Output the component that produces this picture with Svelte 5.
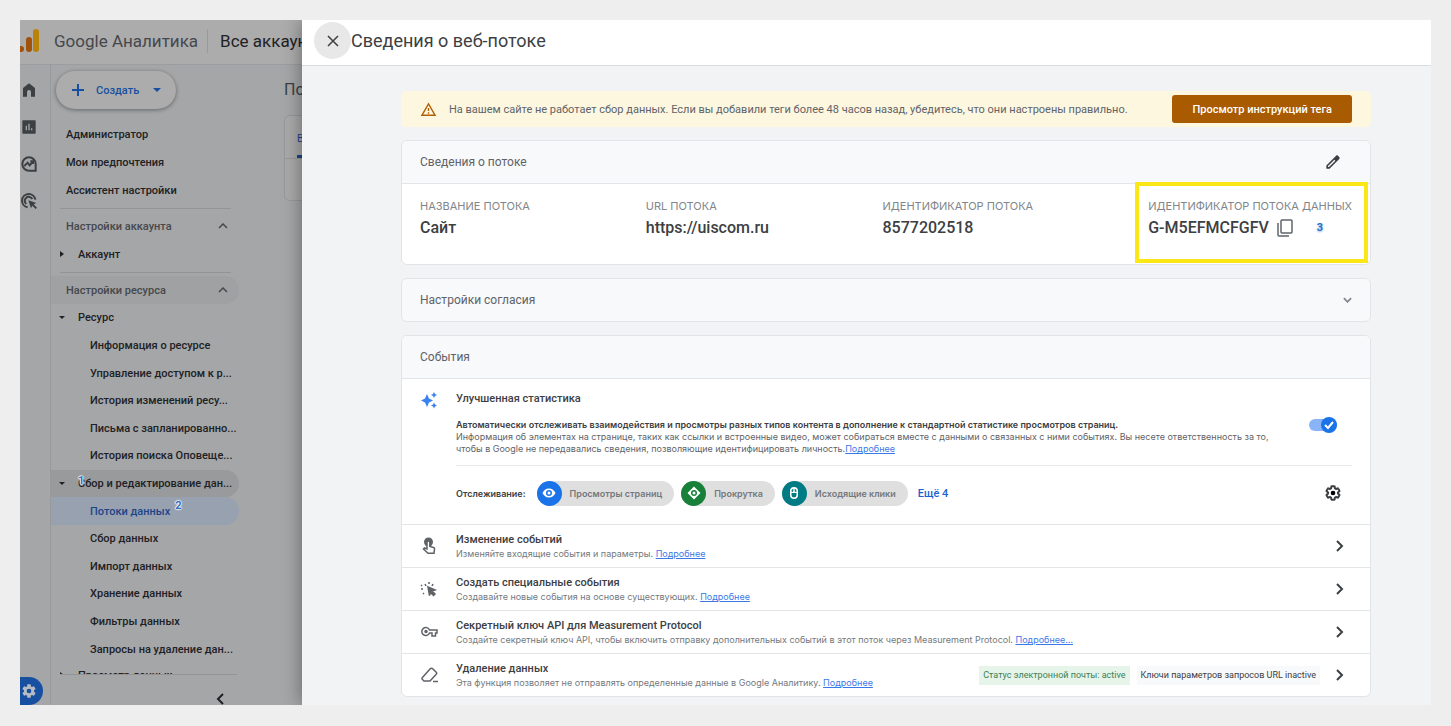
<script>
	const accountLinks = ['Администратор', 'Мои предпочтения', 'Ассистент настройки'];

	const resourceItems = [
		{ label: 'Ресурс', group: true },
		{ label: 'Информация о ресурсе' },
		{ label: 'Управление доступом к р...' },
		{ label: 'История изменений ресу...' },
		{ label: 'Письма с запланированно...' },
		{ label: 'История поиска Оповеще...' },
		{ label: 'Сбор и редактирование дан...', group: true, hovered: true, mark: '1' },
		{ label: 'Потоки данных', active: true, mark: '2' },
		{ label: 'Сбор данных' },
		{ label: 'Импорт данных' },
		{ label: 'Хранение данных' },
		{ label: 'Фильтры данных' },
		{ label: 'Запросы на удаление дан...' }
	];

	const trackers = [
		{ label: 'Просмотры страниц', icon: 'eye', color: '#1a73e8' },
		{ label: 'Прокрутка', icon: 'scroll', color: '#188038' },
		{ label: 'Исходящие клики', icon: 'mouse', color: '#007b83' }
	];

	const eventRows = [
		{
			icon: 'touch',
			title: 'Изменение событий',
			text: 'Изменяйте входящие события и параметры.',
			more: 'Подробнее'
		},
		{
			icon: 'burst',
			title: 'Создать специальные события',
			text: 'Создавайте новые события на основе существующих.',
			more: 'Подробнее'
		},
		{
			icon: 'key',
			title: 'Секретный ключ API для Measurement Protocol',
			text: 'Создайте секретный ключ API, чтобы включить отправку дополнительных событий в этот поток через Measurement Protocol.',
			more: 'Подробнее…'
		},
		{
			icon: 'eraser',
			title: 'Удаление данных',
			text: 'Эта функция позволяет не отправлять определенные данные в Google Аналитику.',
			more: 'Подробнее',
			status: true
		}
	];

	const gear =
		'M19.43 12.98c.04-.32.07-.64.07-.98s-.03-.66-.07-.98l2.11-1.65c.19-.15.24-.42.12-.64l-2-3.46c-.12-.22-.39-.3-.61-.22l-2.49 1c-.52-.4-1.08-.73-1.69-.98l-.38-2.65C14.46 2.18 14.25 2 14 2h-4c-.25 0-.46.18-.49.42l-.38 2.65c-.61.25-1.17.59-1.69.98l-2.49-1c-.23-.09-.49 0-.61.22l-2 3.46c-.13.22-.07.49.12.64l2.11 1.65c-.04.32-.07.65-.07.98s.03.66.07.98l-2.11 1.65c-.19.15-.24.42-.12.64l2 3.46c.12.22.39.3.61.22l2.49-1c.52.4 1.08.73 1.69.98l.38 2.65c.03.24.24.42.49.42h4c.25 0 .46-.18.49-.42l.38-2.65c.61-.25 1.17-.59 1.69-.98l2.49 1c.23.09.49 0 .61-.22l2-3.46c.12-.22.07-.49-.12-.64l-2.11-1.65z';

	let enhanced = true;
</script>

<div class="page">
	<div class="frame">
		<div class="app">
			<header class="app-header">
				<svg class="logo" viewBox="0 0 19 24" aria-hidden="true">
					<rect x="13" y="0" width="6" height="23" rx="3" fill="#b98208" />
					<rect x="6" y="8" width="6" height="15" rx="3" fill="#a0510a" />
					<circle cx="1" cy="20" r="3" fill="#a0510a" />
				</svg>
				<span class="brand">Google Аналитика</span>
				<span class="all-accounts">Все аккаунты</span>
			</header>

			<div class="app-body">
				<nav class="rail" aria-label="Разделы">
					<a href="#home" aria-label="Главная">
						<svg viewBox="0 0 24 24"><path d="M3 22V9l9-7 9 7v13h-6v-7a3 3 0 0 0-6 0v7z" /></svg>
					</a>
					<a href="#reports" aria-label="Отчеты">
						<svg viewBox="0 0 24 24"><path fill-rule="evenodd" d="M3 2h18a1 1 0 0 1 1 1v18a1 1 0 0 1-1 1H3a1 1 0 0 1-1-1V3a1 1 0 0 1 1-1zm4 8v7h2v-7zm4-3v10h2V7zm4 7v3h2v-3z" /></svg>
					</a>
					<a href="#explore" aria-label="Исследования">
						<svg viewBox="0 0 24 24"><path class="line" d="M12 2a10 10 0 1 0 0 20h10V12A10 10 0 0 0 12 2z" /><path class="line" d="M5 15l5-5 3 4 5-6M14 8h4v4" /></svg>
					</a>
					<a href="#ads" aria-label="Реклама">
						<svg viewBox="0 0 24 24"><path class="line" d="M10 21.500A10 10 0 1 1 21.500 10M8 16.500A6 6 0 1 1 17 9" /><path d="M11 11l12 4-4 2 5 5-2 2-5-5-2 4z" /></svg>
					</a>
					<a class="admin" href="#admin" aria-label="Администратор">
						<svg viewBox="0 0 24 24"><path fill-rule="evenodd" d="{gear}M12 8.500a3.500 3.500 0 1 0 0 7 3.500 3.500 0 0 0 0-7z" /></svg>
					</a>
				</nav>

				<aside class="sidebar">
					<button class="create">
						<svg viewBox="0 0 14 14" aria-hidden="true"><path d="M7 1v12M1 7h12" stroke="currentColor" stroke-width="2" /></svg>
						<span>Создать</span>
						<i class="tri"></i>
					</button>

					{#each accountLinks as link}
						<a class="item" href="#settings">{link}</a>
					{/each}

					<hr />
					<button class="section">
						Настройки аккаунта
						<svg viewBox="0 0 10 6" aria-hidden="true"><path d="M1 5l4-4 4 4" /></svg>
					</button>
					<a class="item group" href="#account"><i class="tri right"></i>Аккаунт</a>
					<hr />
					<button class="section hovered">
						Настройки ресурса
						<svg viewBox="0 0 10 6" aria-hidden="true"><path d="M1 5l4-4 4 4" /></svg>
					</button>

					<div class="tree">
						{#each resourceItems as item}
							<a
								class="item"
								class:group={item.group}
								class:child={!item.group}
								class:hovered={item.hovered}
								class:active={item.active}
								href="#property"
							>
								{#if item.group}<i class="tri"></i>{/if}
								<span class="label">
									{item.label}
									{#if item.mark}<b class="mark" class:first={item.group}>{item.mark}</b>{/if}
								</span>
							</a>
						{/each}
					</div>

					<div class="cut">
						<a class="item group" href="#view"><i class="tri right"></i>Просмотр данных</a>
					</div>
					<div class="collapse">
						<button aria-label="Свернуть меню">
							<svg viewBox="0 0 8 12"><path d="M7 1L2 6l5 5" /></svg>
						</button>
					</div>
				</aside>

				<section class="behind">
					<h2>Потоки данных</h2>
					<div class="behind-card">
						<div class="behind-tab"><span>Все</span></div>
					</div>
				</section>
			</div>
		</div>

		<main class="drawer">
			<header class="drawer-header">
				<button class="close" aria-label="Закрыть">
					<svg viewBox="0 0 12 12"><path d="M1 1l10 10M11 1L1 11" /></svg>
				</button>
				<h1>Сведения о веб-потоке</h1>
			</header>

			<div class="content">
				<div class="banner">
					<svg viewBox="0 0 24 24" aria-hidden="true"><path d="M12 6l7.500 13h-15L12 6m0-4L1 21h22L12 2zm1 14h-2v2h2v-2zm0-6h-2v4h2v-4z" /></svg>
					<p>На вашем сайте не работает сбор данных. Если вы добавили теги более 48 часов назад, убедитесь, что они настроены правильно.</p>
					<button>Просмотр инструкций тега</button>
				</div>

				<section class="card">
					<div class="card-head">
						<h2>Сведения о потоке</h2>
						<button class="edit" aria-label="Изменить">
							<svg viewBox="0 0 24 24"><path d="M14 8.500l1.500 1.500L6 19.500H4.500V18L14 8.500M18 2c-.5 0-1 .2-1.400.6L2 17.200V22h4.800L21.400 7.400c.8-.8.8-2 0-2.800l-2-2C19 2.200 18.500 2 18 2z" fill-rule="evenodd" /></svg>
						</button>
					</div>
					<dl class="details">
						<div>
							<dt>НАЗВАНИЕ ПОТОКА</dt>
							<dd>Сайт</dd>
						</div>
						<div>
							<dt>URL ПОТОКА</dt>
							<dd>https://uiscom.ru</dd>
						</div>
						<div>
							<dt>ИДЕНТИФИКАТОР ПОТОКА</dt>
							<dd>8577202518</dd>
						</div>
						<div class="highlighted">
							<dt>ИДЕНТИФИКАТОР ПОТОКА ДАННЫХ</dt>
							<dd>
								G-M5EFMCFGFV
								<button class="copy" aria-label="Копировать">
									<svg viewBox="0 0 16 18"><path d="M5 1h9a1 1 0 0 1 1 1v11a1 1 0 0 1-1 1H5a1 1 0 0 1-1-1V2a1 1 0 0 1 1-1zM1 4v12a1 1 0 0 0 1 1h10" /></svg>
								</button>
								<b class="mark">3</b>
							</dd>
						</div>
					</dl>
				</section>

				<section class="card">
					<div class="card-head">
						<h2>Настройки согласия</h2>
						<button class="expand" aria-label="Развернуть">
							<svg viewBox="0 0 10 6"><path d="M1 1l4 4 4-4" /></svg>
						</button>
					</div>
				</section>

				<section class="card">
					<div class="card-head">
						<h2>События</h2>
					</div>

					<div class="enhanced">
						<svg class="sparkle" viewBox="0 0 18 18" aria-hidden="true">
							<path d="M7 3L9 7.500 13 9.500 9 11.500 7 16 5 11.500 1 9.500 5 7.500z" />
							<path d="M14 1l1 2 2 1-2 1-1 2-1-2-2-1 2-1zM14 11.500l1 2 2 1-2 1-1 2-1-2-2-1 2-1z" />
						</svg>
						<div class="enhanced-main">
							<h3>Улучшенная статистика</h3>
							<div class="about">
								<p>
									<strong>Автоматически отслеживать взаимодействия и просмотры разных типов контента в дополнение к стандартной статистике просмотров страниц.</strong><br />
									Информация об элементах на странице, таких как ссылки и встроенные видео, может собираться вместе с данными о связанных с ними событиях. Вы несете ответственность за то, чтобы в Google не передавались сведения, позволяющие идентифицировать личность.<a href="#more">Подробнее</a>
								</p>
								<label class="switch">
									<input type="checkbox" bind:checked={enhanced} aria-label="Улучшенная статистика" />
									<span class="knob">
										<svg viewBox="0 0 16 16"><path d="M4 8l3 3 5-6" /></svg>
									</span>
								</label>
							</div>
							<div class="tracking">
								<span class="tracking-label">Отслеживание:</span>
								{#each trackers as t}
									<span class="chip">
										<span class="chip-icon" style="background: {t.color}">
											<svg viewBox="0 0 14 14" aria-hidden="true">
												{#if t.icon === 'eye'}
													<path fill-rule="evenodd" d="M7 2.500C4 2.500 1.600 4.300.5 7c1.100 2.700 3.500 4.500 6.500 4.500s5.400-1.800 6.500-4.500C12.400 4.300 10 2.500 7 2.500zM7 4a3 3 0 1 1 0 6 3 3 0 0 1 0-6z" />
													<circle cx="7" cy="7" r="1.500" />
												{:else if t.icon === 'scroll'}
													<path fill-rule="evenodd" d="M7 .500L13.500 7 7 13.500.500 7zM7 4a3 3 0 1 0 0 6 3 3 0 0 0 0-6z" />
													<circle cx="7" cy="7" r="1.500" />
												{:else}
													<path fill-rule="evenodd" d="M7 1a4 4 0 0 1 4 4v4a4 4 0 0 1-8 0V5a4 4 0 0 1 4-4zM4.500 7v2a2.500 2.500 0 0 0 5 0V7zM4.500 5.800h1.800V2.700A2.500 2.500 0 0 0 4.500 5zm3.200 0h1.800V5a2.500 2.500 0 0 0-1.800-2.300z" />
												{/if}
											</svg>
										</span>
										{t.label}
									</span>
								{/each}
								<a class="more-chips" href="#all">Ещё 4</a>
								<button class="gear" aria-label="Настроить">
									<svg viewBox="0 0 24 24"><path d={gear} /><circle cx="12" cy="12" r="3.500" /></svg>
								</button>
							</div>
						</div>
					</div>

					{#each eventRows as row}
						<div class="event">
							<svg class="event-icon" viewBox="0 0 18 18" aria-hidden="true">
								{#if row.icon === 'touch'}
									<circle cx="8.500" cy="5" r="4.500" fill="currentColor" stroke="none" />
									<path d="M7 12V5.500a1.400 1.400 0 0 1 2.800 0V9.500l3.700 1c.8.200 1.200.8 1 1.600L14 16.200H8L3.500 12l1-1z" fill="#fff" />
								{:else if row.icon === 'burst'}
									<path d="M8 7l7 3-3 1 3 3-1.500 1.500-3-3-1 3z" fill="currentColor" />
									<path d="M5 4l1 2M9 2v2M13 4l-1 2M1 9h2M4 13l-1 1M1 5l1 1" />
								{:else if row.icon === 'key'}
									<path d="M9.500 7H17v3h-1.500v3H12v-3H9.500a4 4 0 1 1 0-3z" />
									<circle cx="6" cy="8.500" r="1" fill="currentColor" />
								{:else}
									<path d="M2 12l8-9c1-1 2-1 3 0l3 3c1 1 1 1.500 0 2.500L10 15H4l-2-2zM13 15.500h5" />
								{/if}
							</svg>
							<div class="event-text">
								<h3>{row.title}</h3>
								<p>{row.text} <a href="#more">{row.more}</a></p>
							</div>
							{#if row.status}
								<span class="status on">Статус электронной почты: active</span>
								<span class="status">Ключи параметров запросов URL inactive</span>
							{/if}
							<button class="next" aria-label={row.title}>
								<svg viewBox="0 0 8 12"><path d="M1 1l5 5-5 5" /></svg>
							</button>
						</div>
					{/each}
				</section>
			</div>
		</main>
	</div>
</div>

<style>
	:global(body) {
		background: #eee;
	}

	.page {
		padding: 20px;
		font-family: Roboto, "Liberation Sans", sans-serif;
		font-size: 11px;
		color: #3c4043;
	}

	.page * {
		box-sizing: border-box;
	}

	h1,
	h2,
	h3,
	p,
	dl,
	dd {
		margin: 0;
	}

	button {
		font: inherit;
		color: inherit;
		border: 0;
		padding: 0;
		background: none;
		cursor: pointer;
	}

	a {
		text-decoration: none;
		color: inherit;
	}

	svg {
		display: block;
		flex: none;
	}

	.frame {
		display: grid;
		grid-template-columns: 282px minmax(0, 1fr);
		overflow: hidden;
	}

	/* dimmed application under the drawer */
	.app {
		display: flex;
		flex-direction: column;
		overflow: hidden;
		background: #a5a6a8;
		color: #202124;
		white-space: nowrap;
	}

	.app-header {
		display: flex;
		align-items: center;
		height: 45px;
		padding-bottom: 3px;
		background: #acacac;
		border-bottom: 1px solid #9b9ea1;
		font-size: 17px;
	}

	.logo {
		width: 19px;
		height: 24px;
		margin-right: 15px;
	}

	.brand {
		color: #45484c;
	}

	.all-accounts {
		margin-left: 9px;
		padding-left: 12px;
		line-height: 24px;
		border-left: 1px solid #999;
	}

	.app-body {
		display: flex;
		flex: 1;
	}

	.rail {
		display: flex;
		flex: none;
		flex-direction: column;
		width: 31px;
		padding-top: 17px;
		gap: 21px;
		border-right: 1px solid #98999b;
		color: #3c4043;
	}

	.rail svg {
		width: 16px;
		height: 16px;
		margin-left: 1px;
		fill: currentColor;
	}

	.rail .line {
		fill: none;
		stroke: currentColor;
		stroke-width: 3;
	}

	.rail .admin {
		display: flex;
		align-items: center;
		width: 23px;
		height: 28px;
		margin-top: auto;
		border-radius: 0 14px 14px 0;
		background: #1750a0;
		color: #b8bcc2;
	}

	.sidebar {
		display: flex;
		flex: none;
		flex-direction: column;
		width: 188px;
	}

	.create {
		display: flex;
		align-items: center;
		width: 120px;
		height: 38px;
		margin: 6px 0 11px 5px;
		padding: 0 15px;
		border-radius: 19px;
		background: #acacac;
		box-shadow: 0 1px 4px rgba(0, 0, 0, 0.4);
		color: #1750a0;
		font-weight: 500;
	}

	.create svg {
		width: 14px;
		height: 14px;
		margin-right: 11px;
	}

	.tri {
		flex: none;
		border: 4px solid transparent;
		border-top-color: currentColor;
		border-bottom: 0;
	}

	.tree .tri {
		border-width: 3px;
		border-bottom: 0;
		margin: 0 1px;
	}

	.tri.right {
		border: 3px solid transparent;
		border-left: 4px solid currentColor;
		border-right: 0;
		margin: 0 2px;
	}

	.create .tri {
		margin-left: auto;
	}

	.item,
	.section {
		display: flex;
		align-items: center;
		flex: none;
		height: 28px;
		padding-left: 15px;
		font-weight: 500;
		border-radius: 0 14px 14px 0;
	}

	hr {
		width: 171px;
		margin: 4px 0 3px 9px;
		border: 0;
		border-top: 1px solid #939496;
	}

	.section {
		justify-content: space-between;
		padding-right: 11px;
		color: #45484c;
	}

	.section svg {
		width: 10px;
		height: 6px;
	}

	.section path,
	.collapse path,
	.close path,
	.copy path,
	.expand path,
	.next path,
	.knob path {
		fill: none;
		stroke: currentColor;
		stroke-width: 2;
	}

	.section path,
	.close path,
	.copy path {
		stroke-width: 1.5;
	}

	.section.hovered {
		background: #a0a1a2;
	}

	.tree {
		display: grid;
		flex: 1;
		grid-auto-rows: minmax(0, 1fr);
	}

	.tree .item {
		height: auto;
	}

	.item.group {
		gap: 12px;
		padding-left: 7px;
	}

	.item.child {
		padding-left: 39px;
	}

	.item.hovered {
		background: #999a9c;
	}

	.item.active {
		background: #97a1b0;
		color: #1c4587;
	}

	.label {
		position: relative;
	}

	.mark {
		color: #2f6fc4;
		font-size: 11px;
		font-weight: 700;
		text-shadow: 0 0 1px #fff, 0 0 1px #fff, 0 0 2px #fff, 0 0 2px #fff, 0 0 2px #fff;
	}

	.label .mark {
		position: absolute;
		left: 100%;
		top: -6px;
		margin-left: 5px;
	}

	.label .mark.first {
		left: 0;
		top: -3px;
		margin-left: 0;
	}

	dd .mark {
		text-shadow: 0 1px 2px #8ab4f8;
	}

	.cut {
		height: 12px;
		overflow: hidden;
		border-bottom: 1px solid #939496;
		margin: 0 2px 0 9px;
	}

	.cut .item {
		height: 24px;
		margin-left: -9px;
	}

	.collapse {
		display: flex;
		align-items: flex-end;
		justify-content: flex-end;
		height: 30px;
		padding-right: 15px;
	}

	.collapse svg {
		width: 8px;
		height: 12px;
	}

	.behind {
		flex: none;
		width: 200px;
		padding: 15px 0 0 15px;
	}

	.behind h2 {
		margin-left: 30px;
		line-height: 20px;
	}

	.behind-card {
		height: 86px;
		margin: 15px 0 0 30px;
		border: 1px solid #989898;
		border-radius: 6px;
		background: #a9a9aa;
	}

	.behind-tab {
		height: 43px;
		padding: 16px 12px 0;
		border-bottom: 1px solid #989898;
		color: #1c4587;
	}

	.behind-tab span {
		display: inline-block;
		height: 26px;
		border-bottom: 3px solid #1c4587;
	}

	/* drawer */
	.drawer {
		position: relative;
		background: #f1f3f4;
		box-shadow: 0 0 18px rgba(0, 0, 0, 0.4);
	}

	.drawer-header {
		display: flex;
		align-items: center;
		height: 46px;
		padding: 0 0 4px 12px;
		background: #fff;
		border-bottom: 1px solid #dadce0;
	}

	.close {
		display: flex;
		align-items: center;
		justify-content: center;
		width: 37px;
		height: 37px;
		border-radius: 50%;
		background: #e8e8e8;
	}

	.close svg {
		width: 12px;
		height: 12px;
	}

	h1 {
		font-size: 18px;
		font-weight: 400;
		color: #3c4043;
	}

	.content {
		display: flex;
		flex-direction: column;
		gap: 13px;
		padding: 25px 60px 8px 99px;
	}

	.banner {
		display: flex;
		align-items: center;
		height: 36px;
		padding: 0 19px;
		border-radius: 5px;
		background: #fef7e0;
	}

	.banner svg {
		width: 17px;
		height: 17px;
		margin-right: 12px;
		fill: #b06000;
	}

	.banner p {
		flex: 1;
		color: #5f6368;
	}

	.banner button {
		height: 28px;
		padding: 0 20px;
		border-radius: 3px;
		background: #a85b00;
		color: #fff;
		font-weight: 500;
	}

	.card {
		border: 1px solid #e2e4e7;
		border-radius: 6px;
		background: #fff;
		overflow: hidden;
	}

	.card-head {
		display: flex;
		align-items: center;
		justify-content: space-between;
		height: 42px;
		padding: 0 18px;
		background: #f8f9fb;
	}

	.card-head + * {
		border-top: 1px solid #e2e4e7;
	}

	h2 {
		font-size: 12px;
		font-weight: 400;
		color: #5f6368;
	}

	.app h2 {
		font-size: 16px;
		color: #3c4043;
	}

	.edit {
		margin-right: 11px;
	}

	.edit svg {
		width: 16px;
		height: 16px;
		fill: #3c4043;
	}

	.expand {
		color: #80868b;
	}

	.expand svg {
		width: 9px;
		height: 6px;
	}

	.details {
		display: grid;
		grid-template-columns: 226fr 237fr 266fr 222fr;
		height: 81px;
		padding-left: 18px;
	}

	.details > div {
		position: relative;
		padding-top: 14px;
	}

	dt {
		line-height: 16px;
		font-family: Inter, Roboto, sans-serif;
		font-size: 11px;
		color: #80868b;
	}

	dd {
		display: flex;
		align-items: center;
		line-height: 20px;
		margin-top: 4px;
		font-size: 16px;
		font-weight: 500;
		color: #3c4043;
	}

	.copy {
		margin: 0 24px 0 8px;
		color: #5f6368;
	}

	.copy svg {
		width: 16px;
		height: 18px;
	}

	.highlighted::before {
		content: '';
		position: absolute;
		inset: -2px 2px 1px -13px;
		border: 4px solid #fbe716;
		pointer-events: none;
	}

	.enhanced {
		display: flex;
		gap: 18px;
		padding: 12px 18px 0;
		height: 146px;
	}

	.sparkle {
		width: 18px;
		height: 18px;
		fill: #3b82f0;
	}

	.enhanced-main {
		flex: 1;
	}

	h3 {
		font-size: 11px;
		line-height: 16px;
		font-weight: 500;
	}

	.about {
		display: flex;
		padding: 12px 0 10px;
		border-bottom: 1px solid #e8eaed;
	}

	.about p {
		flex: 1;
		font-family: Inter, Roboto, sans-serif;
		font-size: 9px;
		line-height: 12px;
		color: #5f6368;
	}

	.about strong {
		font-weight: 600;
		color: #3c4043;
	}

	.about a,
	.event a {
		color: #3b78e7;
		text-decoration: underline;
	}

	.switch {
		display: flex;
		width: 28px;
		height: 12px;
		margin: 0 15px 0 18px;
		border-radius: 6px;
		background: #8ab4f8;
	}

	.switch input {
		position: absolute;
		opacity: 0;
		margin: 0;
	}

	.knob {
		width: 16px;
		height: 16px;
		margin: -2px 0 0 auto;
		border-radius: 50%;
		background: #1a73e8;
		color: #fff;
	}

	.switch input:not(:checked) + .knob {
		margin-left: 0;
	}

	.tracking {
		display: flex;
		align-items: center;
		height: 54px;
		gap: 7px;
		font-family: Inter, Roboto, sans-serif;
		font-size: 9px;
		font-weight: 600;
	}

	.tracking-label {
		margin-right: 4px;
	}

	.chip {
		display: flex;
		align-items: center;
		gap: 8px;
		height: 25px;
		padding-right: 12px;
		border-radius: 13px;
		background: #dfdfdf;
		color: #74787c;
	}

	.chip-icon {
		display: flex;
		align-items: center;
		justify-content: center;
		width: 25px;
		height: 25px;
		border-radius: 50%;
	}

	.chip-icon svg {
		width: 14px;
		height: 14px;
		fill: #fff;
	}

	.more-chips {
		margin-left: 3px;
		font-family: Roboto, sans-serif;
		font-size: 11px;
		font-weight: 500;
		color: #1a63cf;
	}

	.gear {
		margin: 0 11px 0 auto;
	}

	.gear svg {
		width: 16px;
		height: 16px;
		overflow: visible;
	}

	.gear path {
		fill: none;
		stroke: #3c4043;
		stroke-width: 3;
	}

	.event {
		display: flex;
		align-items: center;
		height: 43px;
		padding: 0 26px 0 18px;
		border-top: 1px solid #e2e4e7;
	}

	.event-icon {
		width: 18px;
		height: 18px;
		margin-right: 18px;
		color: #5f6368;
		fill: none;
		stroke: currentColor;
		stroke-width: 1.5;
	}

	.event-text {
		flex: 1;
	}

	.event p {
		font-family: Inter, Roboto, sans-serif;
		font-size: 9px;
		line-height: 12px;
		color: #74797e;
	}

	.status {
		padding: 0 4px;
		margin-right: 7px;
		font-size: 9px;
		line-height: 19px;
		background: #f8f9fa;
	}

	.status.on {
		background: #e6f4ea;
		color: #3c8053;
	}

	.next {
		margin-left: 9px;
	}

	.next svg {
		width: 8px;
		height: 12px;
	}
</style>
